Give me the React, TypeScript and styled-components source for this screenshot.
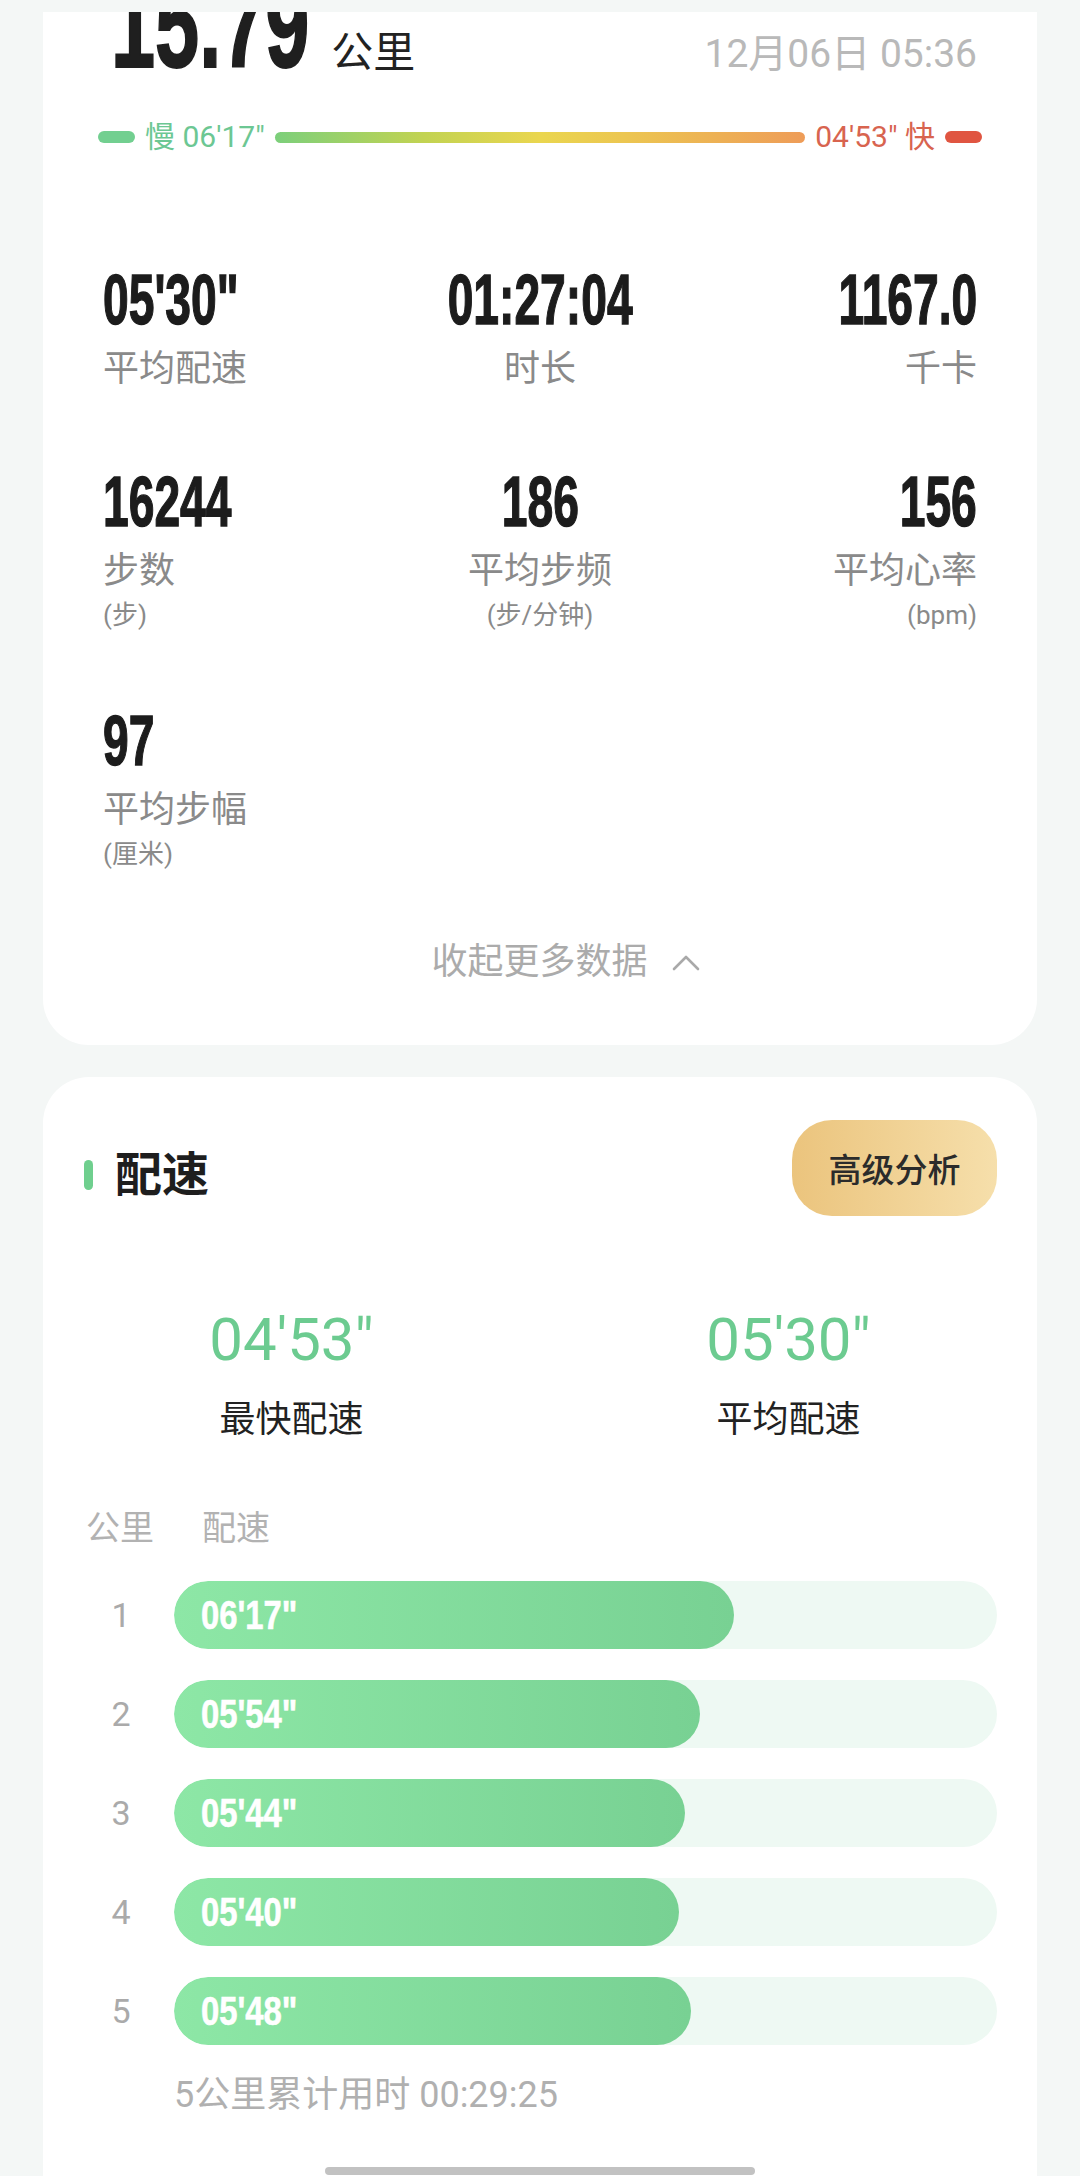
import React from 'react';
import styled, { createGlobalStyle } from 'styled-components';

const GlobalStyle = createGlobalStyle`
  html, body { margin: 0; padding: 0; background: #f4f7f6; }
  body { font-family: Roboto, "Noto Sans CJK SC", sans-serif; -webkit-font-smoothing: antialiased; }
  * { box-sizing: border-box; }
`;

const COND = `"Liberation Sans", Arial, "Noto Sans CJK SC", sans-serif`;

const Page = styled.div`
  width: 1080px;
  height: 2176px;
  overflow: hidden;
  background: #f4f7f6;
  position: relative;
`;

const TopGap = styled.div`
  height: 12px;
`;

const SummaryCard = styled.section`
  margin: 0 43px;
  background: #ffffff;
  border-radius: 0 0 46px 46px;
  overflow: hidden;
  padding: 0 60px 59px;
`;

const HeaderRow = styled.div`
  display: flex;
  align-items: baseline;
  margin-top: -47px;
`;

const BigNumber = styled.span`
  display: inline-block;
  font-family: ${COND};
  font-weight: 700;
  font-size: 122px;
  line-height: 120px;
  color: #1f1f1f;
  -webkit-text-stroke: 2px #1f1f1f;
  transform: scaleX(0.65);
  transform-origin: left center;
  margin-right: -107px;
  margin-left: 8px;
`;

const BigUnit = styled.span`
  font-size: 42px;
  line-height: 48px;
  color: #222;
  margin-left: 22px;
`;

const DateText = styled.span`
  margin-left: auto;
  font-size: 39px;
  line-height: 48px;
  color: #b9b9b9;
`;

const LegendRow = styled.div`
  display: flex;
  align-items: center;
  gap: 10px;
  height: 30px;
  margin: 37px -5px 0;
`;

const LegendCap = styled.span<{ $color: string }>`
  width: 37px;
  height: 12px;
  border-radius: 6px;
  background: ${p => p.$color};
  flex: none;
`;

const LegendText = styled.span<{ $color: string }>`
  font-size: 30px;
  line-height: 30px;
  color: ${p => p.$color};
  white-space: nowrap;
`;

const LegendBar = styled.span`
  flex: 1;
  height: 11px;
  border-radius: 6px;
  background: linear-gradient(90deg, #7ccf7b 0%, #c2d352 28%, #ead64f 50%, #ecc651 66%, #ee9c58 100%);
`;

const StatGrid = styled.div`
  display: grid;
  grid-template-columns: repeat(3, 1fr);
  row-gap: 74px;
  margin-top: 113px;
  align-items: start;
`;

const StatCell = styled.div<{ $align: 'start' | 'center' | 'end' }>`
  display: flex;
  flex-direction: column;
  align-items: ${p => (p.$align === 'start' ? 'flex-start' : p.$align === 'end' ? 'flex-end' : 'center')};
  --origin: ${p => (p.$align === 'start' ? 'left' : p.$align === 'end' ? 'right' : 'center')};
`;

const StatValue = styled.span`
  display: inline-block;
  font-family: ${COND};
  font-weight: 700;
  font-size: 70px;
  line-height: 70px;
  color: #1c1c1c;
  -webkit-text-stroke: 1.4px #1c1c1c;
  transform: scaleX(0.66);
  transform-origin: var(--origin) center;
  white-space: nowrap;
`;

const StatLabel = styled.span`
  font-size: 36px;
  line-height: 48px;
  color: #8a8a8a;
  margin-top: 10px;
`;

const StatUnit = styled.span`
  font-size: 26px;
  line-height: 34px;
  color: #8a8a8a;
  margin-top: 3px;
`;

const CollapseRow = styled.div`
  display: flex;
  justify-content: center;
  align-items: center;
  gap: 24px;
  padding-left: 51px;
  margin-top: 67px;
`;

const CollapseText = styled.span`
  font-size: 36px;
  line-height: 48px;
  color: #ababab;
`;

const PaceCard = styled.section`
  margin: 32px 43px 0;
  background: #ffffff;
  border-radius: 46px 46px 0 0;
  padding: 43px 40px 300px 41px;
`;

const TitleRow = styled.div`
  display: flex;
  justify-content: space-between;
  align-items: flex-start;
`;

const TitleGroup = styled.div`
  display: flex;
  align-items: center;
  gap: 22px;
  margin-top: 25px;
  height: 60px;
`;

const TitleMark = styled.span`
  width: 9px;
  height: 30px;
  border-radius: 5px;
  background: #6fcf8e;
`;

const Title = styled.h2`
  margin: 0;
  font-size: 47px;
  line-height: 60px;
  font-weight: 700;
  color: #1e1e1e;
`;

const AnalysisButton = styled.button`
  width: 205px;
  height: 96px;
  border: none;
  border-radius: 40px;
  background: linear-gradient(90deg, #ebc47d 0%, #f6dfab 100%);
  font-family: Roboto, "Noto Sans CJK SC", sans-serif;
  font-size: 33px;
  font-weight: 500;
  color: #2b2b2b;
  padding: 0;
`;

const Highlights = styled.div`
  display: grid;
  grid-template-columns: 1fr 1fr;
  margin: 89px -40px 0 -41px;
`;

const Highlight = styled.div`
  display: flex;
  flex-direction: column;
  align-items: center;
`;

const HighlightValue = styled.span`
  font-size: 60px;
  line-height: 70px;
  color: #6ccb90;
`;

const HighlightLabel = styled.span`
  font-size: 36px;
  line-height: 48px;
  color: #222;
  margin-top: 21px;
`;

const TableHead = styled.div`
  display: flex;
  margin-top: 62px;
  padding-left: 2px;
  font-size: 34px;
  line-height: 44px;
  color: #b2b2b2;
`;

const HeadCell = styled.span<{ $w?: number }>`
  width: ${p => (p.$w ? `${p.$w}px` : 'auto')};
`;

const SplitList = styled.div`
  display: flex;
  flex-direction: column;
  gap: 31px;
  margin-top: 31px;
`;

const SplitRow = styled.div`
  display: flex;
  align-items: center;
  height: 68px;
`;

const SplitIndex = styled.span`
  width: 74px;
  text-align: center;
  font-size: 34px;
  color: #aaaaaa;
`;

const Track = styled.div`
  flex: 1;
  margin-left: 16px;
  height: 68px;
  border-radius: 34px;
  background: #eef9f3;
  overflow: hidden;
`;

const Fill = styled.div`
  height: 100%;
  border-radius: 34px;
  background: linear-gradient(90deg, #8de7a6 0%, #78d193 100%);
  display: flex;
  align-items: center;
  padding-left: 27px;
`;

const FillLabel = styled.span`
  display: inline-block;
  font-family: ${COND};
  font-weight: 700;
  font-size: 40px;
  line-height: 44px;
  color: #ffffff;
  -webkit-text-stroke: 0.6px #ffffff;
  transform: scaleX(0.82);
  transform-origin: left center;
`;

const Footnote = styled.div`
  margin-top: 26px;
  margin-left: 90px;
  font-size: 36px;
  line-height: 48px;
  color: #b0b0b0;
`;

const HomeIndicator = styled.div`
  position: absolute;
  left: 325px;
  bottom: 1px;
  width: 430px;
  height: 8px;
  border-radius: 4px;
  background: #c2c2c2;
`;

type Stat = { value: string; label: string; unit?: string };

const stats: Stat[] = [
  { value: `05'30"`, label: '平均配速' },
  { value: '01:27:04', label: '时长' },
  { value: '1167.0', label: '千卡' },
  { value: '16244', label: '步数', unit: '(步)' },
  { value: '186', label: '平均步频', unit: '(步/分钟)' },
  { value: '156', label: '平均心率', unit: '(bpm)' },
  { value: '97', label: '平均步幅', unit: '(厘米)' },
];

const splits = [
  { km: 1, pace: `06'17"`, sec: 377 },
  { km: 2, pace: `05'54"`, sec: 354 },
  { km: 3, pace: `05'44"`, sec: 344 },
  { km: 4, pace: `05'40"`, sec: 340 },
  { km: 5, pace: `05'48"`, sec: 348 },
];

const aligns: Array<'start' | 'center' | 'end'> = ['start', 'center', 'end'];

const ChevronUp = () => (
  <svg width="28" height="17" viewBox="0 0 28 17" fill="none">
    <polyline points="2,15 14,3 26,15" stroke="#a9a9a9" strokeWidth="2.6" strokeLinecap="round" strokeLinejoin="round" />
  </svg>
);

export default function App() {
  return (
    <Page>
      <GlobalStyle />
      <TopGap />
      <SummaryCard>
        <HeaderRow>
          <BigNumber>15.79</BigNumber>
          <BigUnit>公里</BigUnit>
          <DateText>12月06日 05:36</DateText>
        </HeaderRow>
        <LegendRow>
          <LegendCap $color="#72cf90" />
          <LegendText $color="#6cc793">慢 06'17"</LegendText>
          <LegendBar />
          <LegendText $color="#d8644f">04'53" 快</LegendText>
          <LegendCap $color="#e05541" />
        </LegendRow>
        <StatGrid>
          {stats.map((s, i) => (
            <StatCell key={s.label} $align={aligns[i % 3]}>
              <StatValue>{s.value}</StatValue>
              <StatLabel>{s.label}</StatLabel>
              {s.unit && <StatUnit>{s.unit}</StatUnit>}
            </StatCell>
          ))}
        </StatGrid>
        <CollapseRow>
          <CollapseText>收起更多数据</CollapseText>
          <ChevronUp />
        </CollapseRow>
      </SummaryCard>

      <PaceCard>
        <TitleRow>
          <TitleGroup>
            <TitleMark />
            <Title>配速</Title>
          </TitleGroup>
          <AnalysisButton>高级分析</AnalysisButton>
        </TitleRow>
        <Highlights>
          <Highlight>
            <HighlightValue>04'53"</HighlightValue>
            <HighlightLabel>最快配速</HighlightLabel>
          </Highlight>
          <Highlight>
            <HighlightValue>05'30"</HighlightValue>
            <HighlightLabel>平均配速</HighlightLabel>
          </Highlight>
        </Highlights>
        <TableHead>
          <HeadCell $w={116}>公里</HeadCell>
          <HeadCell>配速</HeadCell>
        </TableHead>
        <SplitList>
          {splits.map(s => (
            <SplitRow key={s.km}>
              <SplitIndex>{s.km}</SplitIndex>
              <Track>
                <Fill style={{ width: `${(s.sec / 554) * 100}%` }}>
                  <FillLabel>{s.pace}</FillLabel>
                </Fill>
              </Track>
            </SplitRow>
          ))}
        </SplitList>
        <Footnote>5公里累计用时 00:29:25</Footnote>
      </PaceCard>
      <HomeIndicator />
    </Page>
  );
}
